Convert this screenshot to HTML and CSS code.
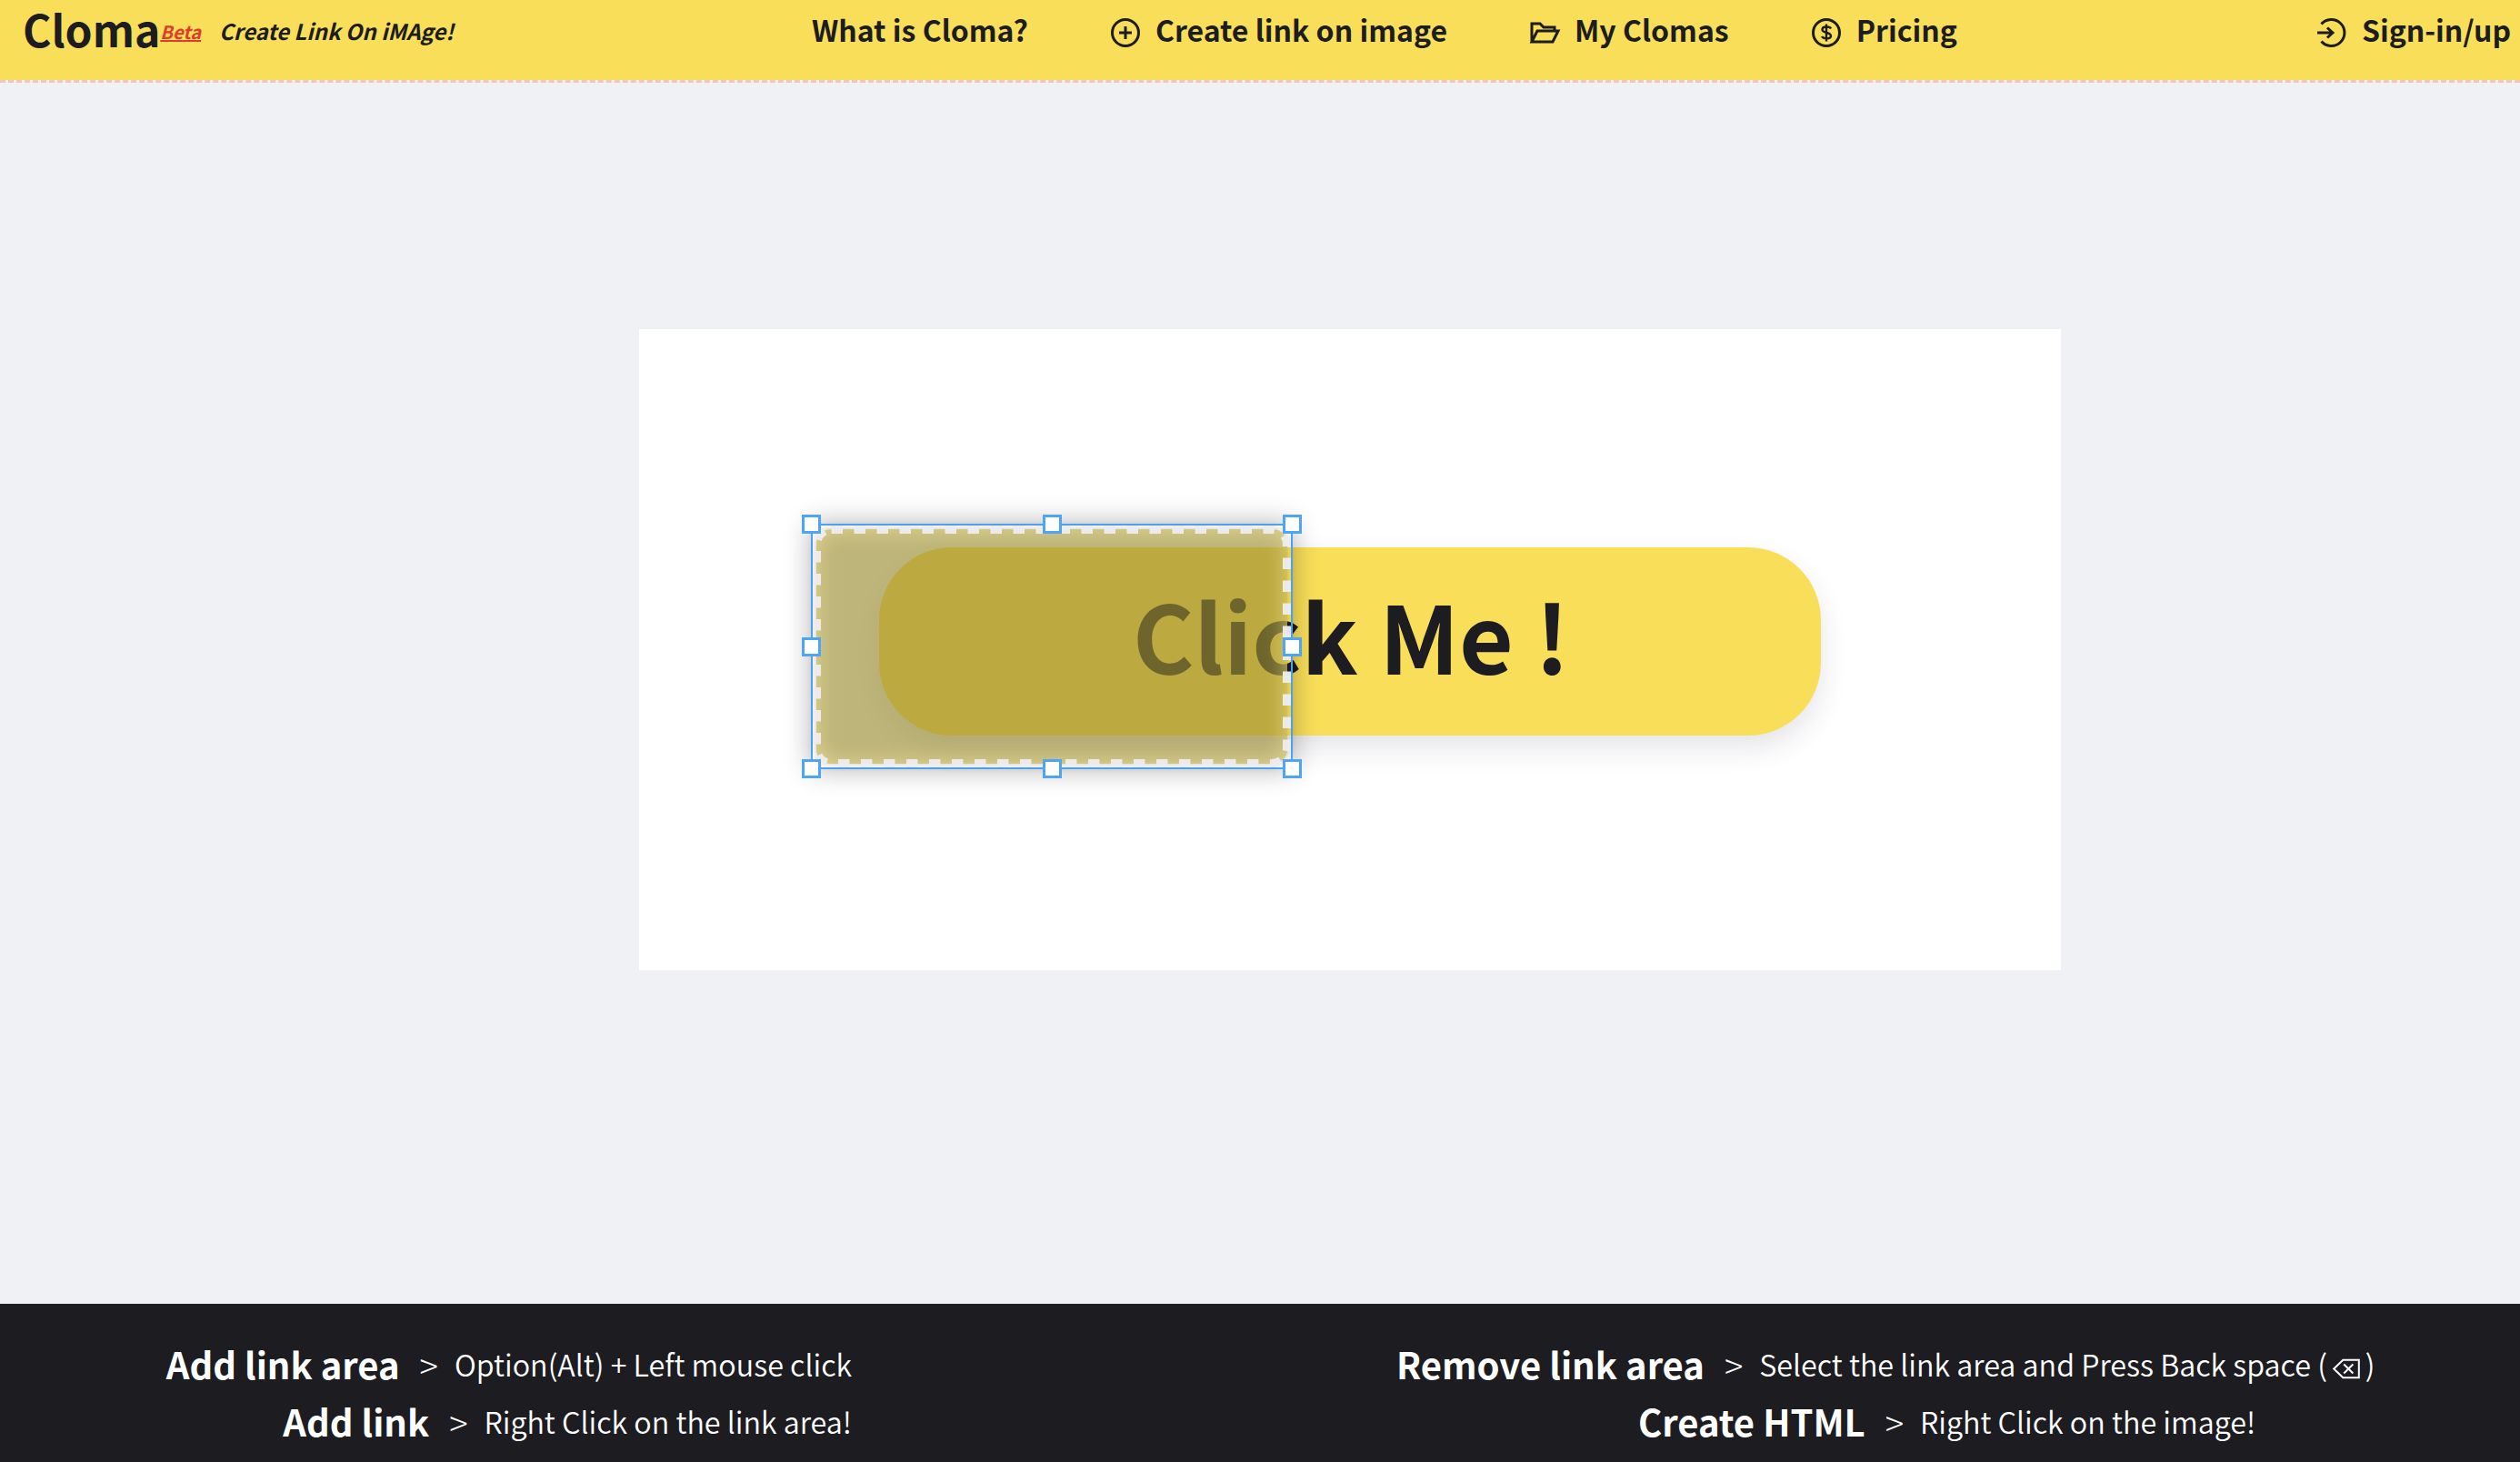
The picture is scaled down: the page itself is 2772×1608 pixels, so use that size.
FILE: index.html
```html
<!DOCTYPE html>
<html lang="en">
<head>
<meta charset="utf-8">
<title>Cloma</title>
<link rel="stylesheet" href="styles.css">
</head>
<body>
<header class="topbar">
  <div class="brand">
    <span class="logo">Cloma</span><a class="beta">Beta</a>
    <em class="tagline">Create Link On iMAge!</em>
  </div>
  <nav class="nav">
    <a class="nav-item">What is Cloma?</a>
    <a class="nav-item"><svg class="icon" viewBox="0 0 32 32"><circle cx="16" cy="16" r="14.5"/><path d="M16 9v14M9 16h14"/></svg>Create link on image</a>
    <a class="nav-item"><svg class="icon icon-folder" viewBox="0 0 32 24"><path d="M2 22V2h9l4 4h12v4M2 22l6-12h23l-6 12z"/></svg>My Clomas</a>
    <a class="nav-item"><svg class="icon" viewBox="0 0 32 32"><circle cx="16" cy="16" r="14.5"/><path class="thin" d="M21 11.500c-1-2.500-9.500-3-9.500 1 0 4.500 9.500 2.500 9.500 7 0 4-8.500 3.500-10 .5M16 6.500v19"/></svg>Pricing</a>
  </nav>
  <a class="nav-item signin"><svg class="icon" viewBox="0 0 32 32"><path d="M4.500 6.500a14.500 14.500 0 1 1 0 19M0 16h17M11 10.500l6 5.500-6 5.500"/></svg>Sign-in/up</a>
</header>
<main class="stage">
  <section class="canvas">
    <div class="pill">Click Me !</div>
    <div class="selection">
      <div class="sel-fill"></div>
      <svg class="sel-art" viewBox="0 0 530 270"><rect class="sel-dash" x="6.500" y="6.500" width="517" height="257" rx="16"/></svg>
      <i class="handle h-tl"></i><i class="handle h-tc"></i><i class="handle h-tr"></i>
      <i class="handle h-ml"></i><i class="handle h-mr"></i>
      <i class="handle h-bl"></i><i class="handle h-bc"></i><i class="handle h-br"></i>
    </div>
  </section>
</main>
<footer class="help">
  <dl class="help-col help-left">
    <div class="tip"><dt>Add link area</dt><dd class="gt">&gt;</dd><dd>Option(Alt) + Left mouse click</dd></div>
    <div class="tip"><dt>Add link</dt><dd class="gt">&gt;</dd><dd>Right Click on the link area!</dd></div>
  </dl>
  <dl class="help-col help-right">
    <div class="tip"><dt>Remove link area</dt><dd class="gt">&gt;</dd><dd>Select the link area and Press Back space (<svg class="bksp" viewBox="0 0 34 25"><path d="M13 2h19v21H13L2 12.500z"/><path d="M14 7l11 11M25 7L14 18"/></svg>)</dd></div>
    <div class="tip tip-indent"><dt>Create HTML</dt><dd class="gt">&gt;</dd><dd>Right Click on the image!</dd></div>
  </dl>
</footer>
</body>
</html>
```
FILE: styles.css
```css
* { box-sizing: border-box; }
html, body { margin: 0; height: 100%; }
body {
  display: flex;
  flex-direction: column;
  height: 1608px;
  overflow: hidden;
  background: #f0f1f4;
  color: #1c1c21;
  font-family: "Noto Sans CJK KR", "Noto Sans", sans-serif;
}
.topbar {
  flex: 0 0 91px;
  display: flex;
  align-items: flex-start;
  background: #f9df59;
  background-clip: padding-box;
  border-bottom: 3px dashed #f3c4bf;
  padding: 0 10px 1px 25px;
  font-weight: 700;
}
.brand { display: flex; align-items: flex-start; }
.logo { font-size: 48px; line-height: 62px; }
.beta { font-size: 20px; line-height: 70px; font-style: italic; color: #e03c2d; text-decoration: underline; }
.tagline { font-size: 24px; line-height: 67px; font-style: italic; margin-left: 20px; }
.nav { display: flex; align-items: flex-start; margin-left: 394px; gap: 91px; }
.nav-item { display: flex; align-items: flex-start; font-size: 32px; line-height: 65px; white-space: nowrap; }
.signin { margin-left: auto; }
.icon { width: 32px; height: 32px; margin: 20px 17px 0 0; flex: none; fill: none; stroke: #1c1c21; stroke-width: 3; overflow: visible; }
.icon-folder { height: 24px; margin-top: 24px; }
.thin { stroke-width: 2.4; }
.stage { flex: 1; padding: 271px 0 0 703px; }
.canvas {
  position: relative;
  width: 1564px;
  height: 705px;
  padding: 240px 0 0 264px;
  background: #fff;
}
.pill {
  width: 1036px;
  height: 207px;
  padding-left: 279px;
  border-radius: 80px;
  background: #f9df59;
  box-shadow: 0 14px 30px rgba(40, 40, 70, 0.12);
  font-size: 103px;
  font-weight: 700;
  line-height: 192px;
  white-space: nowrap;
}
.selection {
  position: absolute;
  left: 189px;
  top: 214px;
  width: 530px;
  height: 270px;
  border: 2.500px solid #4ea5f5;
  box-shadow: 0 0 28px rgba(0, 0, 0, 0.3);
}
.sel-fill {
  position: absolute;
  inset: 4px;
  border-radius: 16px;
  background: rgba(155, 141, 50, 0.65);
  box-shadow: 0 0 8px rgba(0, 0, 0, 0.22), inset 0 0 24px rgba(250, 238, 160, 0.65);
}
.sel-art { position: absolute; left: -2px; top: -2px; width: 530px; height: 270px; }
.sel-dash { fill: none; stroke: rgba(236, 236, 236, 0.97); stroke-width: 9; stroke-dasharray: 12.5 12.5; }
.handle {
  position: absolute;
  width: 21px;
  height: 21px;
  background: #fff;
  border: 3px solid #4ea5f5;
}
.h-tl, .h-tc, .h-tr { top: -12px; }
.h-ml, .h-mr { top: calc(50% - 10.5px); }
.h-bl, .h-bc, .h-br { bottom: -12px; }
.h-tl, .h-ml, .h-bl { left: -12px; }
.h-tc, .h-bc { left: calc(50% - 10.5px); }
.h-tr, .h-mr, .h-br { right: -12px; }
.help {
  flex: 0 0 174px;
  display: flex;
  background: #1c1c21;
  color: #fff;
  padding-top: 35px;
}
.help-col { margin: 0; display: flex; flex-direction: column; }
.help-left { width: 937px; align-items: flex-end; }
.help-right { margin-left: 599px; align-items: flex-start; }
.tip { display: flex; align-items: center; height: 63px; line-height: 63px; }
.tip-indent { margin-left: 266px; }
.tip dt { font-size: 40px; font-weight: 700; white-space: nowrap; }
.tip dd { margin: 0; font-size: 32.300px; font-weight: 350; white-space: nowrap; }
.tip .gt { font-size: 38px; font-weight: 300; margin: 0 18px 0 22px; }
.bksp { width: 32px; height: 23px; fill: none; stroke: #fff; stroke-width: 2.200; margin: 0 5px; vertical-align: -3px; }
```
